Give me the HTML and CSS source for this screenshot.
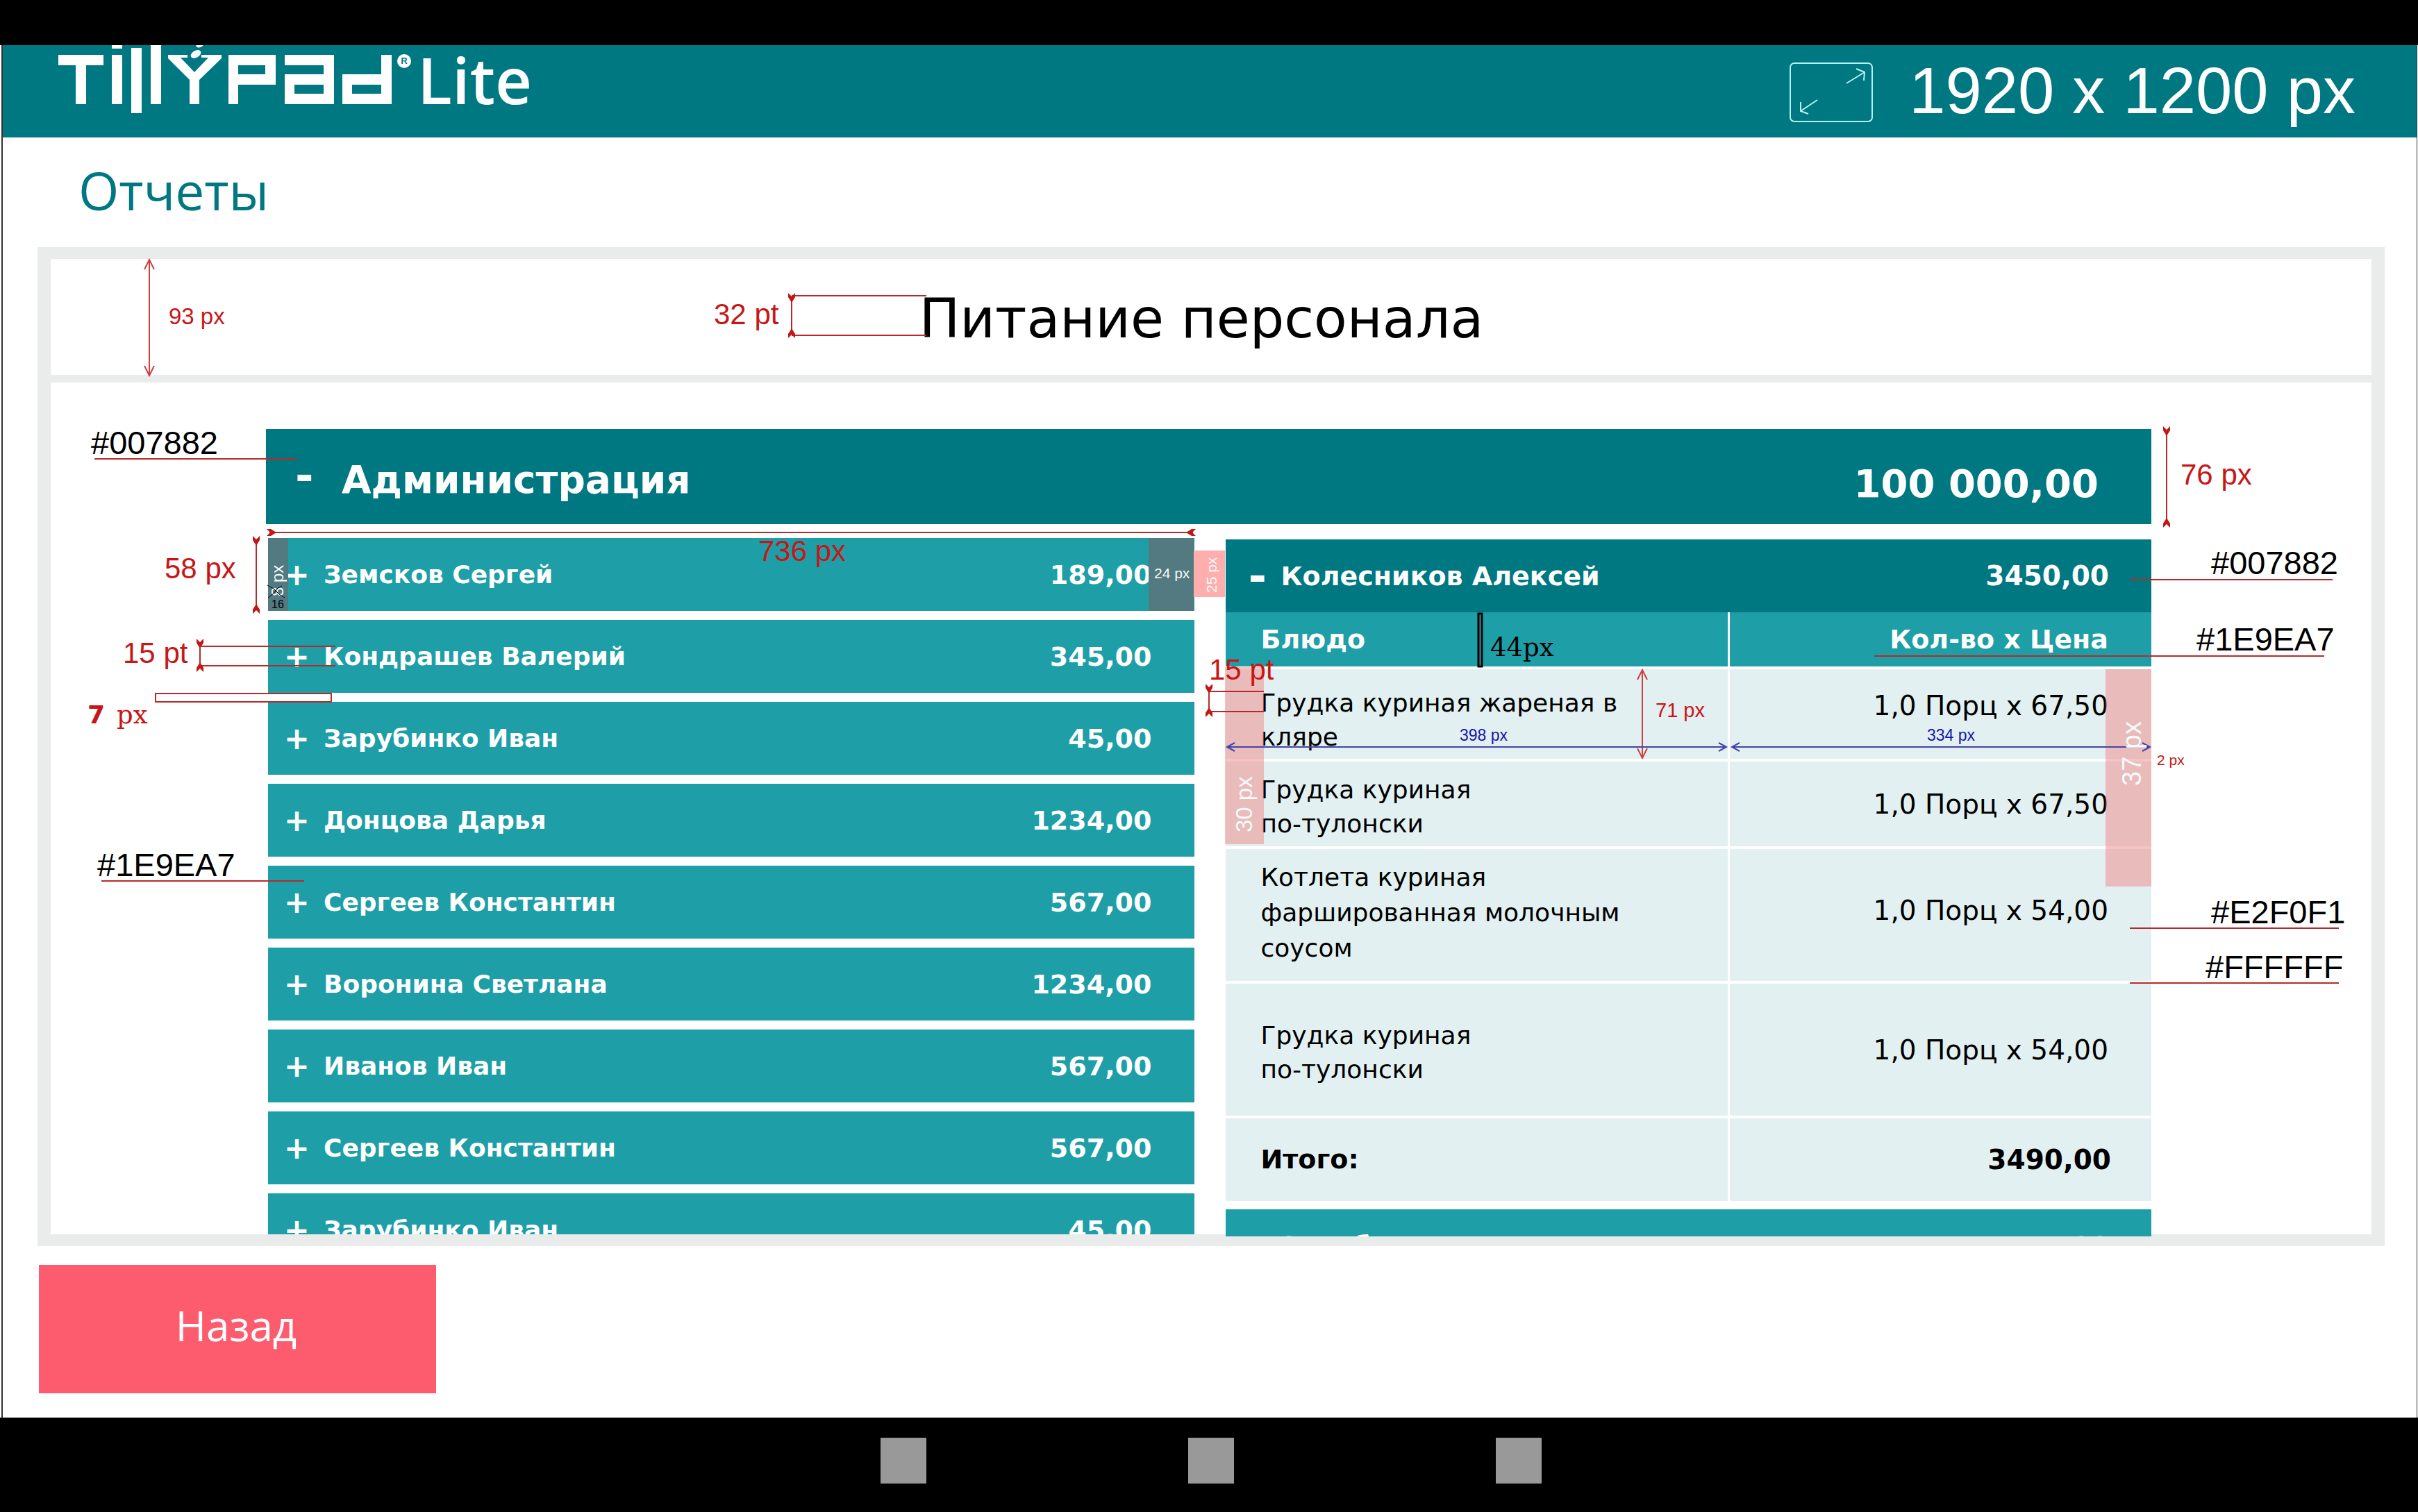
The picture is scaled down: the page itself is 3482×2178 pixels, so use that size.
FILE: index.html
```
<!DOCTYPE html>
<html lang="ru">
<head>
<meta charset="utf-8">
<meta name="viewport" content="width=device-width, initial-scale=1">
<title>Tillypad Lite — Отчеты</title>
<link rel="stylesheet" href="styles.css">
</head>
<body>
<div class="device">
  <div class="status-bar"></div>

  <div class="screen">
    <header class="app-header">
      <div class="brand">
        <svg class="brand-mark" width="516" height="100" viewBox="0 0 516 100" role="img" aria-label="Tillypad">
          <g fill="#fff">
            <rect x="0" y="14" width="65" height="15"/><rect x="25" y="14" width="15" height="71"/>
            <rect x="77" y="0" width="15" height="5"/><rect x="77" y="14" width="15" height="71"/>
            <rect x="105" y="4" width="15" height="94"/>
            <rect x="133" y="0" width="15" height="85"/>
            <path d="M158 14h28v4h-10l20 21 20-21h-10v-4h29v5l-32 31v35h-14v-35l-31-31z"/>
            <ellipse cx="198" cy="13" rx="8" ry="5" transform="rotate(-30 198 13)"/>
            <ellipse cx="204" cy="-1" rx="6" ry="4" transform="rotate(-30 204 -1)"/>
            <path fill-rule="evenodd" d="M245 14h68v43h-54v28h-14zM259 29h39v13h-39z"/>
            <path fill-rule="evenodd" d="M326 14h71v71h-71v-43h56v-13h-56zM340 57h42v13h-42z"/>
            <path fill-rule="evenodd" d="M465 14h15v71h-71v-43h56zM423 57h42v13h-42z"/>
            <circle cx="498" cy="23" r="10"/>
          </g>
          <text class="brand-reg" x="498" y="27" text-anchor="middle">R</text>
        </svg>
        <span class="brand-edition">Lite</span>
      </div>
      <div class="resolution">
        <svg width="122" height="88" viewBox="0 0 122 88" fill="none" stroke="#b4f1f2" stroke-width="2" aria-hidden="true">
          <rect x="2" y="2" width="118" height="84" rx="6"/>
          <path d="M83 31l26-16M97 10l12 5-1 12M41 55L17 71M17 58v13l11 4"/>
        </svg>
        <span>1920 x 1200 px</span>
      </div>
    </header>

    <h1 class="page-title">Отчеты</h1>

    <main class="panel">
      <h2 class="panel-title">Питание персонала</h2>
      <div class="panel-body">
        <button class="group" type="button" aria-expanded="true">
          <span class="group-sign">-</span><span class="group-name">Администрация</span><span class="group-sum">100 000,00</span>
        </button>
        <div class="columns">
          <div class="column">
            <button class="person" type="button"><span class="sign">+</span><span class="name">Земсков Сергей</span><span class="sum">189,00</span></button>
            <button class="person" type="button"><span class="sign">+</span><span class="name">Кондрашев Валерий</span><span class="sum">345,00</span></button>
            <button class="person" type="button"><span class="sign">+</span><span class="name">Зарубинко Иван</span><span class="sum">45,00</span></button>
            <button class="person" type="button"><span class="sign">+</span><span class="name">Донцова Дарья</span><span class="sum">1234,00</span></button>
            <button class="person" type="button"><span class="sign">+</span><span class="name">Сергеев Константин</span><span class="sum">567,00</span></button>
            <button class="person" type="button"><span class="sign">+</span><span class="name">Воронина Светлана</span><span class="sum">1234,00</span></button>
            <button class="person" type="button"><span class="sign">+</span><span class="name">Иванов Иван</span><span class="sum">567,00</span></button>
            <button class="person" type="button"><span class="sign">+</span><span class="name">Сергеев Константин</span><span class="sum">567,00</span></button>
            <button class="person" type="button"><span class="sign">+</span><span class="name">Зарубинко Иван</span><span class="sum">45,00</span></button>
          </div>
          <div class="column column-detail">
            <div class="detail">
              <button class="person person-open" type="button" aria-expanded="true"><span class="sign">-</span><span class="name">Колесников Алексей</span><span class="sum">3450,00</span></button>
              <table class="dishes">
                <thead>
                  <tr><th class="dish" scope="col">Блюдо</th><th class="price" scope="col">Кол-во x Цена</th></tr>
                </thead>
                <tbody>
                  <tr class="row-two"><td class="dish">Грудка куриная жареная в кляре</td><td class="price">1,0 Порц x 67,50</td></tr>
                  <tr class="row-short"><td class="dish">Грудка куриная<br>по-тулонски</td><td class="price">1,0 Порц x 67,50</td></tr>
                  <tr class="row-tall row-three"><td class="dish">Котлета куриная фаршированная молочным соусом</td><td class="price">1,0 Порц x 54,00</td></tr>
                  <tr class="row-tall"><td class="dish">Грудка куриная<br>по-тулонски</td><td class="price">1,0 Порц x 54,00</td></tr>
                </tbody>
                <tfoot>
                  <tr><th class="dish" scope="row">Итого:</th><td class="price">3490,00</td></tr>
                </tfoot>
              </table>
            </div>
            <button class="person person-next" type="button"><span class="sign">+</span><span class="name">Зарубинко Иван</span><span class="sum">45,00</span></button>
          </div>
        </div>
      </div>
    </main>

    <footer class="actions">
      <button class="back" type="button">Назад</button>
    </footer>
  </div>

  <nav class="nav-bar" aria-label="Система">
    <button class="nav-key" type="button" aria-label="Назад"></button>
    <button class="nav-key" type="button" aria-label="Домой"></button>
    <button class="nav-key" type="button" aria-label="Недавние"></button>
  </nav>

  <!-- Dimension and colour callouts drawn over the screen -->
  <svg class="notes" viewBox="0 0 3482 2178" preserveAspectRatio="xMinYMin meet">
    <defs>
      <path id="tail" d="M-5 -10L0 -5L5 -10V-4L0 4L-5 -4Z"/>
      <path id="tip" d="M-7 14L0 0L7 14"/>
    </defs>

    <g class="pad-dark"><rect x="386" y="775" width="29" height="105"/><rect x="1654" y="775" width="65" height="105"/></g>
    <rect class="pad-gap" x="1719" y="793" width="45" height="67"/>
    <g class="pad-pink"><rect x="1764" y="961" width="56" height="255"/><rect x="3032" y="964" width="66" height="313"/></g>

    <g class="line">
      <path d="M1140 426H1334M1140 483H1334M136 661H428M3067 835H3359M2699 945H3347M3067 1337H3368M3067 1416H3368M146 1269H438"/>
      <path d="M290 931H483M290 959H483M1742 996H1820M1742 1025H1820M388 767H1718"/>
      <path d="M1140 428V482M3120 620V755M369 780V876M288 928V962M1741 992V1028"/>
      <rect x="224" y="999" width="253" height="12"/>
    </g>
    <g class="line-thin">
      <path d="M215 375V540M2365 966V1091"/>
      <use href="#tip" x="215" y="374"/><use href="#tip" transform="translate(215 541) rotate(180)"/>
      <use href="#tip" x="2365" y="965"/><use href="#tip" transform="translate(2365 1092) rotate(180)"/>
    </g>
    <g class="tails">
      <use href="#tail" x="1140" y="432"/><use href="#tail" transform="translate(1140 477) rotate(180)"/>
      <use href="#tail" x="3120" y="624"/><use href="#tail" transform="translate(3120 750) rotate(180)"/>
      <use href="#tail" x="369" y="782"/><use href="#tail" transform="translate(369 874) rotate(180)"/>
      <use href="#tail" x="288" y="930"/><use href="#tail" transform="translate(288 958) rotate(180)"/>
      <use href="#tail" x="1741" y="995"/><use href="#tail" transform="translate(1741 1023) rotate(180)"/>
      <use href="#tail" transform="translate(394 767) rotate(-90)"/><use href="#tail" transform="translate(1712 767) rotate(90)"/>
    </g>
    <g class="line-blue">
      <path d="M1767 1076H2486M2494 1076H3096"/>
      <path d="M1778 1070L1767 1076L1778 1082M2475 1070L2486 1076L2475 1082M2505 1070L2494 1076L2505 1082M3085 1070L3096 1076L3085 1082"/>
    </g>
    <rect class="line-black" x="2129" y="884" width="5" height="76"/>

    <g class="hex">
      <text x="131" y="654">#007882</text>
      <text x="3184" y="827">#007882</text>
      <text x="3163" y="937">#1E9EA7</text>
      <text x="3184" y="1330">#E2F0F1</text>
      <text x="3176" y="1409">#FFFFFF</text>
      <text x="140" y="1262">#1E9EA7</text>
    </g>
    <g class="size">
      <text x="1028" y="467">32 pt</text>
      <text x="3140" y="698">76 px</text>
      <text x="237" y="833">58 px</text>
      <text x="177" y="955">15 pt</text>
      <text x="1092" y="808">736 px</text>
      <text x="1741" y="979">15 pt</text>
    </g>
    <text class="size size-33" x="243" y="467">93 px</text>
    <text class="size size-29" x="2384" y="1033">71 px</text>
    <text class="size size-21" x="3106" y="1102">2 px</text>
    <text class="size seven" x="126" y="1042">7</text>
    <text class="size serif" x="168" y="1042">px</text>
    <text class="serif" x="2146" y="945">44px</text>
    <g class="blue"><text x="2102" y="1067">398 px</text><text x="2775" y="1067">334 px</text></g>

    <g class="pale">
      <text class="size-21" x="1662" y="833">24 px</text>
      <text class="size-24" transform="translate(408 859) rotate(-90)">8 px</text>
      <text class="size-21" transform="translate(1752 854) rotate(-90)">25 px</text>
      <text class="size-33" transform="translate(1803 1199) rotate(-90)">30 px</text>
      <text class="size-38" transform="translate(3083 1132) rotate(-90)">37 px</text>
    </g>
    <path class="strike" d="M385 843L394 848L402 856L410 861M386 861L394 855L400 847L406 844"/>
    <text class="size-16" x="391" y="876">16</text>
  </svg>
</div>
</body>
</html>
```
FILE: styles.css
```
* { box-sizing: border-box; }

body {
  margin: 0;
  background: #fff;
  color: #000;
  font-family: "DejaVu Sans", Verdana, sans-serif;
}

button {
  border: 0;
  padding: 0;
  font: inherit;
  color: inherit;
  text-align: left;
}

/* Device frame */
.device {
  position: relative;
  display: flex;
  flex-direction: column;
  height: 100vh;
  overflow: hidden;
}
.status-bar { flex: none; height: 65px; background: #000; }
.screen {
  flex: 1;
  min-height: 0;
  display: flex;
  flex-direction: column;
  margin: 0 1px 0 2px;
  border-left: 2px solid #333;
  border-right: 1px solid #333;
}
.nav-bar {
  flex: none;
  height: 136px;
  display: flex;
  align-items: center;
  justify-content: center;
  gap: 377px;
  padding: 0 0 12px 6px;
  background: #000;
}
.nav-key { width: 66px; height: 66px; background: #999; }

/* Header */
.app-header {
  flex: none;
  height: 133px;
  display: flex;
  justify-content: space-between;
  align-items: flex-start;
  padding: 0 88px 0 80px;
  background: #007882;
  color: #fff;
}
.brand { display: flex; gap: 1px; }
.brand-mark { display: block; }
.brand-reg { font: bold 13px "Liberation Sans", Arial, sans-serif; fill: #007882; }
.brand-edition { font: 600 92px/100px "Open Sans", sans-serif; }
.resolution {
  display: flex;
  align-items: center;
  gap: 51px;
  padding-top: 22px;
  font: 94px/88px "Liberation Sans", Arial, sans-serif;
}
.resolution span { padding-bottom: 4px; }

.page-title {
  flex: none;
  margin: 0;
  padding: 26px 0 32px 109px;
  font: 400 75px/100px "Open Sans", sans-serif;
  color: #007882;
}

/* Report panel */
.panel {
  flex: 1;
  min-height: 0;
  display: flex;
  flex-direction: column;
  margin: 0 46px 0 50px;
  border: 19px solid #e9eceb;
  border-width: 17px 19px;
}
.panel-title {
  flex: none;
  margin: 0;
  padding: 6px 28px 0 0;
  border-bottom: 11px solid #e9eceb;
  font-size: 78px;
  font-weight: 400;
  line-height: 161px;
  text-align: center;
}
.panel-body {
  flex: 1;
  min-height: 0;
  display: flex;
  flex-direction: column;
  padding: 67px 317px 0 310px;
}

.group {
  flex: none;
  height: 137px;
  display: flex;
  align-items: center;
  padding: 8px 76px 0 42px;
  background: #007882;
  color: #fff;
  font-size: 55px;
  font-weight: 700;
}
.group-sign { width: 67px; padding-bottom: 12px; font-size: 64px; }
.group-name { flex: 1; }
.group-sum { padding-top: 12px; font-size: 56px; }

.columns {
  flex: 1;
  min-height: 0;
  display: grid;
  grid-template-columns: 1fr 1fr;
  grid-template-rows: 100%;
  column-gap: 45px;
  padding: 20px 0 0 3px;
}
.column {
  display: flex;
  flex-direction: column;
  gap: 13px;
  min-height: 0;
  overflow: hidden;
}
.column-detail {
  gap: 12px;
  padding-top: 2px;
  overflow: clip;
  overflow-clip-margin: 3px;
}

.person {
  flex: none;
  width: 100%;
  height: 105px;
  display: flex;
  align-items: center;
  padding: 0 61px 0 23px;
  background: #1e9ea7;
  color: #fff;
  font-weight: 700;
}
.sign { width: 57px; font-size: 44px; }
.name { flex: 1; font-size: 36px; }
.sum { font-size: 38px; }
.person-open, .person-next { padding-left: 33px; }
.person-open { background: #007882; }
.person-open .sign, .person-next .sign { width: 47px; }
.person-open .sign { font-size: 64px; }
.person-open .name, .person-next .name { font-size: 38px; }
.person-open .sum { font-size: 39px; }

/* Dishes of the opened person */
.detail { flex: none; }
.dishes {
  width: 100%;
  table-layout: fixed;
  border-spacing: 0;
}
.dishes th, .dishes td {
  padding: 0;
  border-bottom: 4px solid #fff;
  background: #e2f0f1;
  vertical-align: middle;
}
.dishes .dish {
  width: 723px;
  padding: 8px 142px 0 51px;
  text-align: left;
  font-size: 36px;
  line-height: 49px;
}
.dishes .price {
  padding-right: 62px;
  border-left: 3px solid #fff;
  text-align: right;
  font-size: 39px;
  line-height: 49px;
}
.dishes thead th { height: 82px; background: #1e9ea7; color: #fff; }
.dishes thead .dish, .dishes thead .price, .dishes tfoot .dish { padding-top: 0; font-size: 38px; font-weight: 700; }
.row-two td { height: 133px; }
.dishes .row-two .dish { padding-top: 16px; }
.dishes .row-two .price { padding-bottom: 24px; }
.row-short td { height: 126px; }
.row-tall td { height: 194px; }
.dishes .row-three .dish { padding-top: 0; padding-bottom: 8px; line-height: 51px; }
.dishes .row-three .price { padding-bottom: 14px; }
.dishes tfoot th, .dishes tfoot td { height: 119px; border-bottom: 0; font-weight: 700; }
.dishes tfoot .price { padding-right: 58px; }

/* Bottom actions */
.actions { flex: none; padding: 27px 0 35px 52px; }
.back {
  display: block;
  width: 572px;
  height: 185px;
  padding: 0 4px 12px 0;
  background: #fd5c6e;
  color: #fff;
  font: 400 60px/80px "Open Sans", sans-serif;
  text-align: center;
}

/* Callouts */
.notes {
  position: absolute;
  left: 0;
  top: 0;
  width: 100%;
  pointer-events: none;
  font-family: "Liberation Sans", Arial, sans-serif;
}
.pad-dark { fill: #527a80; }
.pad-gap { fill: #ffadad; }
.pad-pink { fill: #f08585; fill-opacity: .5; }
.line { fill: none; stroke: #b82a2a; stroke-width: 2; }
.line-thin { fill: none; stroke: #d04040; stroke-width: 2; }
.line-blue { fill: none; stroke: #4444a8; stroke-width: 2; }
.line-black { fill: none; stroke: #000; stroke-width: 3; }
.tails { fill: #c21717; }
.hex { font-size: 47px; }
.size { font-size: 42px; fill: #c81616; }
.size-38 { font-size: 38px; }
.size-33 { font-size: 33px; }
.size-29 { font-size: 29px; }
.size-24 { font-size: 24px; }
.size-21 { font-size: 21px; }
.size-16 { font-size: 16px; }
.serif { font-family: "DejaVu Serif", serif; font-size: 37px; }
.seven { font: bold 36px "DejaVu Sans", Verdana, sans-serif; }
.blue { font-size: 23px; fill: #1616b0; }
.pale { fill: #f4fbfb; }
.strike { fill: none; stroke: #000; stroke-width: 1; }
```
